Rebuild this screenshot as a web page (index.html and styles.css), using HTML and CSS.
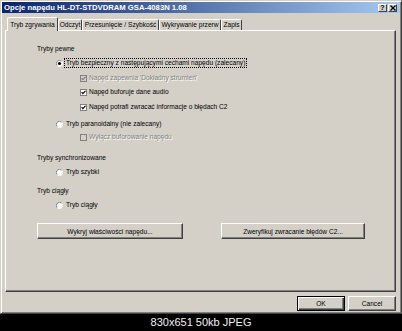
FILE: index.html
```html
<!DOCTYPE html>
<html>
<head>
  <title>Opcje napędu</title>
  <meta charset='utf-8'>
  <link rel="stylesheet" href="styles.css">
</head>
<body>

  <div class="dialog">
    <div class="titlebar">
      <span class="title">Opcje napędu HL-DT-STDVDRAM GSA-4083N 1.08</span>
      <span class="title-btn">?</span>
      <span class="title-btn">
        <svg width="6" height="6" viewBox="0 0 6 6"><path d="M0.5 0.5 L5.5 5.5 M5.5 0.5 L0.5 5.5" stroke="#000" stroke-width="1.3"/></svg>
      </span>
    </div>

    <ul class="tabs">
      <li class="tab active tab-rip">Tryb zgrywania</li>
      <li class="tab tab-read">Odczyt</li>
      <li class="tab tab-offset">Przesunięcie / Szybkość</li>
      <li class="tab tab-gaps">Wykrywanie przerw</li>
      <li class="tab tab-write">Zapis</li>
    </ul>

    <div class="panel">
      <div class="row">Tryby pewne</div>
      <div class="row radio-row gap-4">
        <svg class="radio" width="7" height="7" viewBox="0 0 7 7"><circle cx="3.5" cy="3.5" r="3" fill="#fff"/><path d="M1.3 5.7 A3 3 0 0 1 5.7 1.3" fill="none" stroke="#808080"/><path d="M5.7 1.3 A3 3 0 0 1 1.3 5.7" fill="none" stroke="#fff"/><circle cx="3.5" cy="3.5" r="1.6" fill="#000"/></svg>
        <span class="focus">Tryb bezpieczny z następującymi cechami napędu (zalecany)</span>
      </div>
      <div class="row check-row disabled gap-5">
        <svg class="check" width="7" height="7" viewBox="0 0 7 7"><rect x="0.5" y="0.5" width="6" height="6" fill="#d4d0c8" stroke="#808080"/><path d="M1.6 3.2 L2.9 4.6 L5.5 1.9" fill="none" stroke="#808080" stroke-width="1.2"/></svg>
        Napęd zapewnia 'Dokładny strumień'
      </div>
      <div class="row check-row gap-4">
        <svg class="check" width="7" height="7" viewBox="0 0 7 7"><rect x="0.5" y="0.5" width="6" height="6" fill="#fff" stroke="#808080"/><path d="M1.6 3.2 L2.9 4.6 L5.5 1.9" fill="none" stroke="#000" stroke-width="1.2"/></svg>
        Napęd buforuje dane audio
      </div>
      <div class="row check-row gap-5">
        <svg class="check" width="7" height="7" viewBox="0 0 7 7"><rect x="0.5" y="0.5" width="6" height="6" fill="#fff" stroke="#808080"/><path d="M1.6 3.2 L2.9 4.6 L5.5 1.9" fill="none" stroke="#000" stroke-width="1.2"/></svg>
        Napęd potrafi zwracać informacje o błędach C2
      </div>
      <div class="row radio-row gap-7">
        <svg class="radio" width="7" height="7" viewBox="0 0 7 7"><circle cx="3.5" cy="3.5" r="3" fill="#fff"/><path d="M1.3 5.7 A3 3 0 0 1 5.7 1.3" fill="none" stroke="#808080"/><path d="M5.7 1.3 A3 3 0 0 1 1.3 5.7" fill="none" stroke="#fff"/></svg>
        <span class="plain">Tryb paranoidalny (nie zalecany)</span>
      </div>
      <div class="row check-row disabled gap-3">
        <svg class="check" width="7" height="7" viewBox="0 0 7 7"><rect x="0.5" y="0.5" width="6" height="6" fill="#d4d0c8" stroke="#808080"/></svg>
        Wyłącz buforowanie napędu
      </div>

      <div class="row gap-11">Tryby synchronizowane</div>
      <div class="row radio-row gap-4">
        <svg class="radio" width="7" height="7" viewBox="0 0 7 7"><circle cx="3.5" cy="3.5" r="3" fill="#fff"/><path d="M1.3 5.7 A3 3 0 0 1 5.7 1.3" fill="none" stroke="#808080"/><path d="M5.7 1.3 A3 3 0 0 1 1.3 5.7" fill="none" stroke="#fff"/></svg>
        <span class="plain">Tryb szybki</span>
      </div>

      <div class="row gap-9">Tryb ciągły</div>
      <div class="row radio-row gap-4">
        <svg class="radio" width="7" height="7" viewBox="0 0 7 7"><circle cx="3.5" cy="3.5" r="3" fill="#fff"/><path d="M1.3 5.7 A3 3 0 0 1 5.7 1.3" fill="none" stroke="#808080"/><path d="M5.7 1.3 A3 3 0 0 1 1.3 5.7" fill="none" stroke="#fff"/></svg>
        <span class="plain">Tryb ciągły</span>
      </div>

      <div class="actions">
        <button class="btn btn-detect">Wykryj właściwości napędu...</button>
        <button class="btn btn-verify">Zweryfikuj zwracanie błędów C2...</button>
      </div>
    </div>

    <div class="footer">
      <button class="btn btn-small default">OK</button>
      <button class="btn btn-small">Cancel</button>
    </div>
  </div>

  <div class="caption">830x651 50kb JPEG</div>

</body>
</html>
```

FILE: styles.css
```css
* {
  box-sizing: border-box;
}
body {
  background: #000;
  font-family: "Liberation Sans", Arial, sans-serif;
  height: 331px;
  margin: 0;
  overflow: hidden;
  width: 402px;
}
.dialog {
  background: #d4d0c8;
  border: 1px solid;
  border-color: #d4d0c8 #404040 #404040 #d4d0c8;
  box-shadow: inset 1px 1px #fff, inset -1px -1px #808080;
  height: 314px;
  padding: 1px;
  width: 402px;
}
.titlebar {
  align-items: center;
  background: linear-gradient(to right, #0a246a, #a6caf0);
  display: flex;
  gap: 1px;
  height: 11px;
  padding: 0 3px 0 2px;
}
.title {
  color: #fff;
  flex: 1;
  font-size: 7.7px;
  font-weight: bold;
  line-height: 11px;
  white-space: nowrap;
}
.title-btn {
  align-items: center;
  background: #d4d0c8;
  border: 1px solid;
  border-color: #fff #404040 #404040 #fff;
  display: flex;
  font-size: 7px;
  font-weight: bold;
  height: 8px;
  justify-content: center;
  line-height: 6px;
  width: 9px;
}
.tabs {
  align-items: flex-end;
  display: flex;
  height: 13px;
  list-style: none;
  margin: 4px 0 0 5px;
  padding: 0;
}
.tab {
  border-left: 1px solid #fff;
  border-right: 1px solid #404040;
  border-top: 1px solid #fff;
  border-radius: 2px 2px 0 0;
  font-size: 6.6px;
  height: 11px;
  line-height: 10px;
  text-align: center;
  white-space: nowrap;
}
.tab.active {
  background: #d4d0c8;
  height: 14px;
  margin-bottom: -1px;
  padding-top: 2px;
  position: relative;
  z-index: 1;
}
.tab-rip { width: 51px; }
.tab-read { width: 24px; }
.tab-offset { width: 77px; }
.tab-gaps { width: 62px; }
.tab-write { width: 21px; }
.panel {
  border: 1px solid;
  border-color: #fff #404040 #404040 #fff;
  box-shadow: inset -1px -1px #808080;
  display: flex;
  flex-direction: column;
  height: 262px;
  margin-left: 3px;
  padding: 13px 0 0 31px;
  width: 391px;
}
.row {
  align-items: center;
  display: flex;
  font-size: 6.6px;
  height: 10px;
  line-height: 10px;
  white-space: nowrap;
}
.gap-3 { margin-top: 3px; }
.gap-4 { margin-top: 4px; }
.gap-5 { margin-top: 5px; }
.gap-7 { margin-top: 7px; }
.gap-9 { margin-top: 9px; }
.gap-11 { margin-top: 11px; }
.radio-row {
  margin-left: 19px;
}
.radio {
  margin-right: 3px;
  flex: none;
}
.focus {
  border: 1px dotted #000;
  line-height: 8px;
  margin-left: -2px;
  padding: 0 1px;
}
.check-row {
  margin-left: 43px;
}
.check {
  flex: none;
  margin-right: 2px;
}
.disabled {
  color: #808080;
  text-shadow: 1px 1px 0 #fff;
}
.actions {
  display: flex;
  gap: 38px;
  margin-top: 13px;
}
.btn {
  background: #d4d0c8;
  border: 1px solid;
  border-color: #fff #404040 #404040 #fff;
  box-shadow: inset -1px -1px #808080;
  color: #000;
  font-family: "Liberation Sans", Arial, sans-serif;
  font-size: 6.6px;
  height: 16px;
  padding: 0;
}
.btn-detect { width: 146px; }
.btn-verify { width: 144px; }
.footer {
  display: flex;
  gap: 3px;
  height: 15px;
  justify-content: flex-end;
  margin-top: 4px;
  padding-right: 4px;
}
.btn-small {
  height: 15px;
  width: 48px;
}
.btn.default {
  border-color: #000;
  box-shadow: inset 1px 1px #fff, inset -1px -1px #404040, inset -2px -2px #808080;
}
.caption {
  color: #f0f0f0;
  font-size: 11px;
  height: 17px;
  line-height: 17px;
  text-align: center;
}
```
